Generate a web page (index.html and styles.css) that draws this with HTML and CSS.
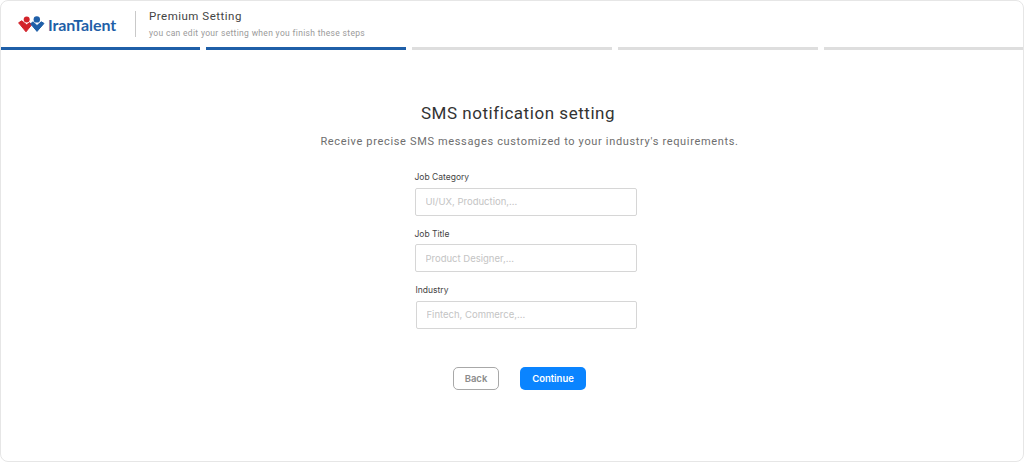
FILE: index.html
```html
<!DOCTYPE html>
<html lang="en">
<head>
  <meta charset="UTF-8">
  <meta name="viewport" content="width=device-width, initial-scale=1">
  <title>Premium Setting</title>
  <link rel="stylesheet" href="styles.css">
</head>
<body>
  <div class="container">
    <header class="top">
      <div class="logo">
        <svg class="logo-mark" width="27" height="17" viewBox="0 0 27 17">
          <circle cx="8.7" cy="3.4" r="3" fill="#d2232a"/>
          <path d="M0.6 6.8 L3.8 4.8 L8.6 8.8 L11.6 6.6 L13.8 8.6 L8 15.8 Z" fill="#d2232a" stroke="#d2232a" stroke-width="1" stroke-linejoin="round"/>
          <circle cx="18.8" cy="3.4" r="3.2" fill="#1f5fa8"/>
          <path d="M12.6 7.8 L15 5.8 L19 9.6 L23.2 5.8 L26 7.4 L19 15.4 Z" fill="#1f5fa8" stroke="#1f5fa8" stroke-width="1" stroke-linejoin="round"/>
        </svg>
        <span class="logo-text">IranTalent</span>
      </div>
      <div class="top-text">
        <div class="top-title">Premium Setting</div>
        <div class="top-sub">you can edit your setting when you finish these steps</div>
      </div>
    </header>

    <div class="steps">
      <span class="step done"></span>
      <span class="step done"></span>
      <span class="step"></span>
      <span class="step"></span>
      <span class="step"></span>
    </div>

    <main class="content">
      <h1>SMS notification setting</h1>
      <p class="lead">Receive precise SMS messages customized to your industry's requirements.</p>

      <form class="form">
        <div class="field">
          <label for="category">Job Category</label>
          <input type="text" id="category" placeholder="UI/UX, Production,...">
        </div>
        <div class="field">
          <label for="title">Job Title</label>
          <input type="text" id="title" placeholder="Product Designer,...">
        </div>
        <div class="field field-last">
          <label for="industry">Industry</label>
          <input type="text" id="industry" placeholder="Fintech, Commerce,...">
        </div>
      </form>

      <div class="buttons">
        <button class="btn-back" type="button">Back</button>
        <button class="btn-blue" type="button">Continue</button>
      </div>
    </main>
  </div>
</body>
</html>
```

FILE: styles.css
```css
* {
  box-sizing: border-box;
}

body {
  margin: 0;
  background-color: #fff;
  font-family: 'Roboto', sans-serif;
}

.container {
  height: 462px;
  overflow: hidden;
  background: #fff;
  border: 1px solid #e6e6e6;
  border-radius: 8px;
}

.top {
  display: flex;
  align-items: center;
  height: 46px;
}

.logo {
  display: flex;
  align-items: center;
  gap: 3px;
  width: 135px;
  height: 26px;
  padding-left: 17px;
  border-right: 1px solid #c9c9c9;
}

.logo-mark {
  flex: none;
}

.logo-text {
  font-family: 'Lato', sans-serif;
  font-size: 16px;
  font-weight: 700;
  letter-spacing: -0.1px;
  color: #1f5fa8;
}

.top-text {
  padding-left: 13px;
}

.top-title {
  font-size: 11.5px;
  line-height: 14px;
  letter-spacing: 0.5px;
  color: #444;
}

.top-sub {
  margin-top: 5px;
  font-size: 8.5px;
  line-height: 11px;
  letter-spacing: 0.32px;
  color: #9a9a9a;
}

.steps {
  display: flex;
  gap: 6px;
  margin: 0 -1px;
}

.step {
  flex: 1;
  height: 3px;
  background-color: #dedede;
}

.step.done {
  background-color: #1f5fa8;
}

.content {
  display: flex;
  flex-direction: column;
  align-items: center;
}

h1 {
  margin: 53px 0 0 12px;
  font-size: 17px;
  line-height: 21px;
  font-weight: 400;
  letter-spacing: 0.54px;
  color: #333;
}

.lead {
  margin: 11px 0 0 35px;
  font-size: 11px;
  line-height: 14px;
  letter-spacing: 0.66px;
  color: #6e6e6e;
}

.form {
  width: 222px;
  margin: 22px 0 0 27px;
}

.field {
  margin-bottom: 12px;
}

.field label {
  display: block;
  height: 16.5px;
  font-family: 'Inter', sans-serif;
  font-size: 8.5px;
  line-height: 12px;
  color: #444;
}

.field-last {
  padding-left: 1px;
}

.field input {
  display: block;
  width: 100%;
  height: 28px;
  padding: 0 10px;
  background: #fff;
  border: 1px solid #d6d6d6;
  border-radius: 2px;
  font-family: 'Inter', sans-serif;
  font-size: 9.5px;
}

.field input::placeholder {
  color: #c4c4c4;
  opacity: 1;
}

.buttons {
  display: flex;
  gap: 21px;
  margin: 26.5px 0 0 15px;
}

button {
  height: 23px;
  padding: 0;
  border-radius: 5px;
  font-family: 'Inter', sans-serif;
  font-size: 9.5px;
  font-weight: 600;
  cursor: pointer;
}

.btn-back {
  width: 46px;
  background: #fff;
  border: 1px solid #a8a8a8;
  color: #8c8c8c;
}

.btn-blue {
  width: 66px;
  background-color: #0a84ff;
  border: none;
  color: #fff;
}
```
